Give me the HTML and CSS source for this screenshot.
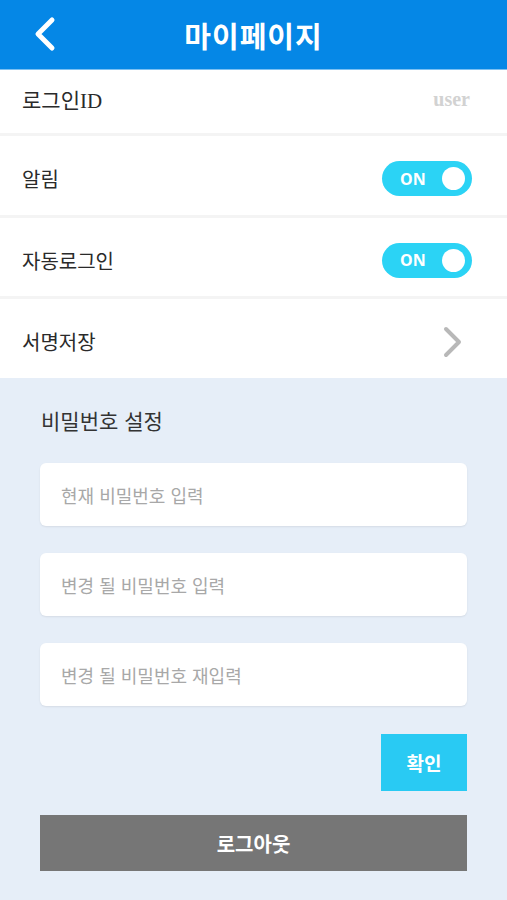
FILE: index.html
```html
<!doctype html>
<html lang="ko">
  <head>
    <meta charset="utf-8">
    <title>마이페이지</title>
    <link rel="stylesheet" href="styles.css">
  </head>
  <body>
    <header class="topbar">
      <a class="back" href="#">
        <svg width="28" height="36" viewBox="0 0 28 36">
          <path d="M22 4 L8 18 L22 32" fill="none" stroke="#fff" stroke-width="5" stroke-linecap="round" stroke-linejoin="round"/>
        </svg>
      </a>
      <h1>마이페이지</h1>
    </header>

    <ul class="settings">
      <li class="row row-id">
        <span class="label serif">로그인ID</span>
        <span class="value">user</span>
      </li>
      <li class="row">
        <span class="label">알림</span>
        <span class="toggle">ON<i class="knob"></i></span>
      </li>
      <li class="row">
        <span class="label">자동로그인</span>
        <span class="toggle">ON<i class="knob"></i></span>
      </li>
      <li class="row">
        <span class="label">서명저장</span>
        <svg class="chev" width="22" height="34" viewBox="0 0 22 34">
          <path d="M4 4 L17 17 L4 30" fill="none" stroke="#b8b8b8" stroke-width="4" stroke-linecap="round" stroke-linejoin="round"/>
        </svg>
      </li>
    </ul>

    <section class="password">
      <h2>비밀번호 설정</h2>
      <input class="field" type="password" placeholder="현재 비밀번호 입력">
      <input class="field" type="password" placeholder="변경 될 비밀번호 입력">
      <input class="field" type="password" placeholder="변경 될 비밀번호 재입력">
      <div class="actions">
        <button class="confirm">확인</button>
      </div>
      <button class="logout">로그아웃</button>
    </section>
  </body>
</html>
```

FILE: styles.css
```css
html {
  font-family: "Noto Sans CJK KR", "Noto Sans", sans-serif;
  color: #222;
  background-color: #e6eef8;
}

body { margin: 0; }

.topbar {
  display: flex;
  align-items: center;
  justify-content: center;
  position: relative;
  height: 69px;
  background-color: #0587e6;
  border-bottom: 1px solid #7cc0f2;
}

.topbar h1 {
  margin: 0;
  color: #fff;
  font-size: 29px;
  font-weight: 700;
  letter-spacing: 1px;
}

.back {
  position: absolute;
  left: 30px;
  top: 16px;
}

.settings {
  list-style: none;
  margin: 0;
  padding: 0;
  background-color: #fff;
}

.row {
  display: flex;
  align-items: center;
  justify-content: space-between;
  box-sizing: border-box;
  height: 82px;
  padding: 6px 35px 0 22px;
  border-bottom: 3px solid #f4f4f4;
}

.row:nth-child(3) { height: 81px; }

.row:last-child {
  height: 79px;
  border-bottom: none;
}

.row-id {
  height: 66px;
  padding-top: 0;
  padding-bottom: 5px;
  padding-right: 37px;
}

.label {
  font-size: 20px;
  font-weight: 400;
  color: #2a2a2a;
}

.serif {
  font-family: "Liberation Serif", "Noto Sans CJK KR", serif;
  font-size: 21px;
}

.value {
  font-family: "Liberation Serif", serif;
  font-weight: 700;
  font-size: 20px;
  color: #d2d2d2;
}

.toggle {
  display: flex;
  align-items: center;
  justify-content: space-between;
  box-sizing: border-box;
  width: 90px;
  height: 35px;
  padding: 0 7px 0 18px;
  border-radius: 18px;
  background-color: #2bd3f5;
  color: #fff;
  font-family: "Noto Sans", sans-serif;
  font-weight: 700;
  font-size: 16px;
}

.knob {
  width: 23px;
  height: 23px;
  border-radius: 50%;
  background-color: #fff;
}

.chev { margin-right: 8px; }

.password {
  display: flex;
  flex-direction: column;
  padding: 27px 40px 28px 40px;
}

.password h2 {
  margin: 0 0 28px 1px;
  font-size: 21px;
  font-weight: 400;
  color: #333;
}

.field {
  height: 63px;
  margin-bottom: 27px;
  padding: 0 21px;
  border: none;
  border-radius: 6px;
  background-color: #fff;
  box-shadow: 0 1px 2px rgba(0, 0, 0, 0.08);
  font-family: inherit;
  font-size: 18px;
  outline: none;
}

.field::placeholder {
  color: #a8a8a8;
}

.actions {
  display: flex;
  justify-content: flex-end;
  margin-top: 1px;
}

.confirm, .logout {
  border: none;
  color: #fff;
  font-family: inherit;
  font-weight: 700;
}

.confirm {
  width: 86px;
  height: 57px;
  background-color: #29caf3;
  font-size: 19px;
}

.logout {
  height: 56px;
  margin-top: 24px;
  background-color: #767676;
  font-size: 20px;
}
```
